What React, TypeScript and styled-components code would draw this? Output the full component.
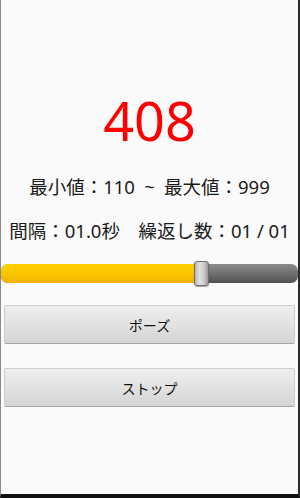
import React from "react";
import styled, { createGlobalStyle } from "styled-components";

const GlobalStyle = createGlobalStyle`
  html, body {
    margin: 0;
    padding: 0;
    background: #111;
  }
  * {
    box-sizing: border-box;
  }
`;

const Screen = styled.div`
  width: 300px;
  height: 498px;
  background: #fafafa;
  border-left: 1px solid #8a8a8a;
  border-right: 2px solid #2a2a2a;
  border-bottom: 4px solid #111;
  display: flex;
  flex-direction: column;
  font-family: "Noto Sans", "Noto Sans CJK JP", sans-serif;
  overflow: hidden;
`;

const Count = styled.div`
  margin-top: 88px;
  height: 64px;
  display: flex;
  align-items: center;
  justify-content: center;
  font-size: 54px;
  line-height: 1;
  color: #ff0000;
`;

const InfoRow = styled.div<{ $top: number }>`
  margin-top: ${(p) => p.$top}px;
  height: 24px;
  display: flex;
  align-items: center;
  justify-content: center;
  font-size: 18.5px;
  color: #1a1a1a;
  white-space: pre;
`;

const SliderWrap = styled.div`
  margin-top: 19px;
  height: 25px;
  position: relative;
  display: flex;
  align-items: center;
`;

const Track = styled.div`
  flex: 1;
  height: 19px;
  border-radius: 7px;
  background: linear-gradient(#8c8c8c, #6a6a6a 60%, #505050);
  overflow: hidden;
  display: flex;
`;

const Fill = styled.div`
  height: 100%;
  background: linear-gradient(#ffd200, #fbc400 55%, #f2b000);
`;

const Thumb = styled.div`
  position: absolute;
  top: 0;
  width: 15px;
  height: 25px;
  margin-left: -7px;
  border-radius: 3px;
  border: 1px solid #6e6e6e;
  background: linear-gradient(90deg, #b5b5b5, #e2e2e2 35%, #d0d0d0 65%, #9a9a9a);
  box-shadow: 0 1px 1px rgba(0, 0, 0, 0.35);
`;

const Buttons = styled.div`
  margin-top: 19px;
  padding: 0 3px;
  display: flex;
  flex-direction: column;
  gap: 24px;
`;

const Button = styled.button`
  height: 39px;
  width: 100%;
  border: 1px solid #cdcdcd;
  border-bottom-color: #a5a5a5;
  border-radius: 2px;
  background: linear-gradient(#efefef, #e2e2e2 50%, #d4d4d4);
  font-family: "Noto Sans CJK JP", sans-serif;
  font-size: 14px;
  color: #111;
  padding: 0;
`;

const Slider: React.FC<{ value: number }> = ({ value }) => {
  const pct = `${value * 100}%`;
  return (
    <SliderWrap>
      <Track>
        <Fill style={{ width: pct }} />
      </Track>
      <Thumb style={{ left: pct }} />
    </SliderWrap>
  );
};

const App: React.FC = () => {
  return (
    <>
      <GlobalStyle />
      <Screen>
        <Count>408</Count>
        <InfoRow $top={22}>{"最小値：110\u2002~\u2002最大値：999"}</InfoRow>
        <InfoRow $top={20}>{"間隔：01.0秒　繰返し数：01 / 01"}</InfoRow>
        <Slider value={0.675} />
        <Buttons>
          <Button>ポーズ</Button>
          <Button>ストップ</Button>
        </Buttons>
      </Screen>
    </>
  );
};

export default App;
